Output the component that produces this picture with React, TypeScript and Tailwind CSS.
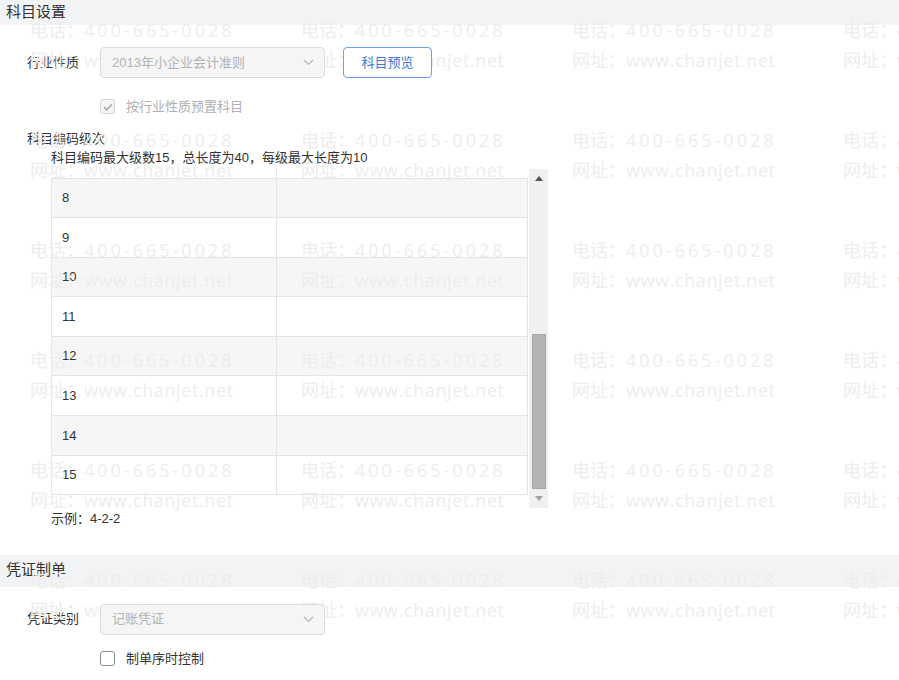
import React from 'react'

const wmRows = [0, 1, 2, 3, 4, 5]
const wmCols = [0, 1, 2, 3]

const Watermark = () => (
    <div className="pointer-events-none absolute left-[30px] top-[15px] z-10 grid grid-cols-[repeat(4,271px)] text-[#ededed] [font-family:'Open_Sans','Noto_Sans_CJK_SC',sans-serif]">
        {wmRows.map(r =>
            wmCols.map(c => (
                <div key={`${r}-${c}`} className="h-[110px] whitespace-nowrap text-[18px] leading-[30px]">
                    <div>电话：<span className="tracking-[3px]">400-665-0028</span></div>
                    <div>网址：<span className="tracking-[0.6px]">www.chanjet.net</span></div>
                </div>
            ))
        )}
    </div>
)

const Chevron = () => (
    <svg width="11" height="7" viewBox="0 0 11 7" className="text-[#b5b5b5]">
        <path d="M1 1l4.5 4.5L10 1" fill="none" stroke="currentColor" strokeWidth="1.2" />
    </svg>
)

const Select = ({ value }: { value: string }) => (
    <div className="relative z-20 flex h-[31px] w-[225px] items-center justify-between rounded-[4px] border border-[#dcdcdc] bg-[#f5f5f5] pl-[11px] pr-[10px] text-[13px] text-[#b3b3b3]">
        <span>{value}</span>
        <Chevron />
    </div>
)

const Checkbox = ({ checked, label, disabled }: { checked?: boolean; label: string; disabled?: boolean }) => (
    <div className="flex items-center gap-[11px]">
        <div className={`flex h-[15px] w-[15px] items-center justify-center rounded-[3px] border ${disabled ? 'border-[#d4d4d4] bg-[#f5f5f5]' : 'border-[#8c8c8c] bg-white'}`}>
            {checked && (
                <svg width="10" height="8" viewBox="0 0 10 8">
                    <path d="M1 4l2.8 2.8L9 1.3" fill="none" stroke="#a8a8a8" strokeWidth="1.5" />
                </svg>
            )}
        </div>
        <span className={`text-[13px] ${disabled ? 'text-[#b0b0b0]' : 'text-[#333]'}`}>{label}</span>
    </div>
)

const levels = [8, 9, 10, 11, 12, 13, 14, 15]

const LevelTable = () => (
    <div className="flex h-[339px] w-[497px]">
        <div className="w-[477px]">
            <div className="flex h-[10px] border-b border-[#e4e4e4]">
                <div className="w-[226px] border-r border-[#e4e4e4]" />
            </div>
            {levels.map((n, i) => (
                <div
                    key={n}
                    className={`flex h-[39.6px] border-b border-l border-r border-[#e4e4e4] text-[13px] text-[#333] ${i % 2 === 0 ? 'bg-black/[0.035]' : ''}`}
                >
                    <div className="flex w-[225px] items-center border-r border-[#e4e4e4] pl-[10px]">{n}</div>
                    <div className="flex-1" />
                </div>
            ))}
        </div>
        <div className="ml-[1px] flex w-[19px] flex-col items-center bg-[#f0f0f0]">
            <div className="flex h-[20px] items-center">
                <svg width="8" height="5" viewBox="0 0 8 5"><path d="M0 5L4 0l4 5z" fill="#505050" /></svg>
            </div>
            <div className="h-[145px]" />
            <div className="h-[155px] w-[14px] border border-[#a6a6a6] bg-[#b4b4b4]" />
            <div className="flex flex-1 items-center">
                <svg width="8" height="5" viewBox="0 0 8 5"><path d="M0 0h8L4 5z" fill="#a3a3a3" /></svg>
            </div>
        </div>
    </div>
)

export default function App() {
    return (
        <div className="relative h-[680px] w-[899px] overflow-hidden bg-white [font-family:'Liberation_Sans','Noto_Sans_CJK_SC',sans-serif]">
            <div className="flex h-[25px] items-center bg-[#f2f3f5] pl-[6px] text-[15px] text-[#333]">科目设置</div>

            <div className="mt-[22px] flex items-center pl-[27px]">
                <div className="w-[73px] text-[13px] text-[#333]">行业性质</div>
                <Select value="2013年小企业会计准则" />
                <button className="relative z-20 ml-[18px] h-[31px] w-[89px] rounded-[4px] border border-[#6f9ff0] bg-white text-[13px] text-[#3a7bd5]">
                    科目预览
                </button>
            </div>

            <div className="mt-[19px] pl-[100px]">
                <Checkbox checked disabled label="按行业性质预置科目" />
            </div>

            <div className="mt-[14px] pl-[27px] text-[13px] leading-[16px] text-[#333]">科目编码级次</div>
            <div className="mt-[3px] pl-[51px] text-[13px] leading-[16px] text-[#333]">科目编码最大级数15，总长度为40，每级最大长度为10</div>

            <div className="mt-[3px] pl-[51px]">
                <LevelTable />
            </div>

            <div className="mt-[3px] pl-[51px] text-[13px] leading-[16px] text-[#333]">示例：4-2-2</div>

            <div className="mt-[28px] flex h-[32px] items-center bg-[#f2f3f5] pl-[6px] text-[15px] text-[#333]">凭证制单</div>

            <div className="mt-[17px] flex items-center pl-[27px]">
                <div className="w-[73px] text-[13px] text-[#333]">凭证类别</div>
                <Select value="记账凭证" />
            </div>

            <div className="mt-[14px] pl-[100px]">
                <Checkbox label="制单序时控制" />
            </div>

            <Watermark />
        </div>
    )
}
